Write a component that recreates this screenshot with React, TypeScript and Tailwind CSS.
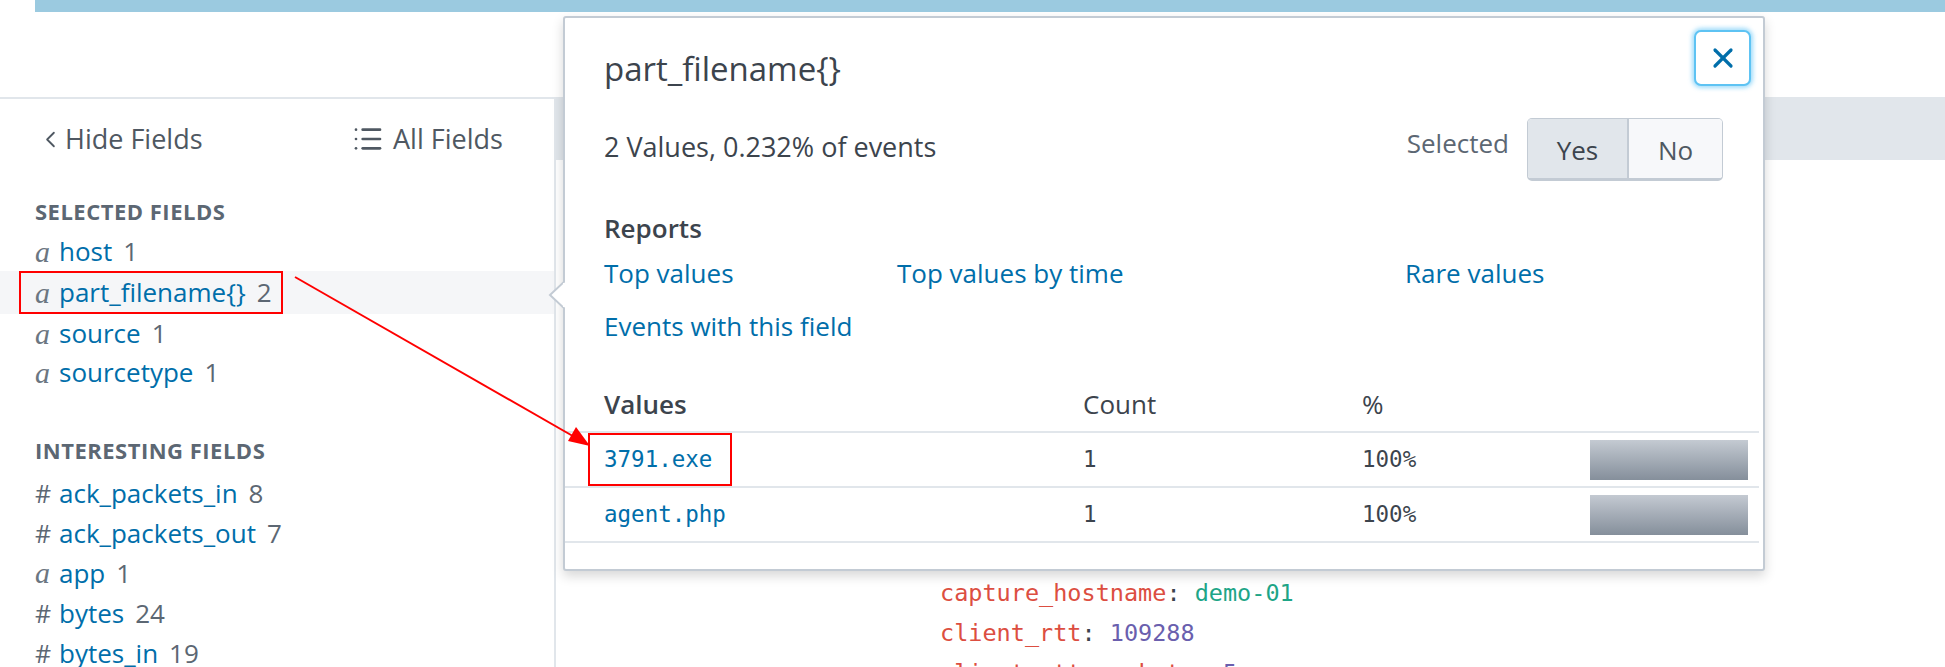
import { ChevronLeft, List, X } from "lucide-react";

const selected = [
  { type: "a", name: "host", count: "1" },
  { type: "a", name: "part_filename{}", count: "2", active: true },
  { type: "a", name: "source", count: "1" },
  { type: "a", name: "sourcetype", count: "1" },
];

const interesting = [
  { type: "#", name: "ack_packets_in", count: "8" },
  { type: "#", name: "ack_packets_out", count: "7" },
  { type: "a", name: "app", count: "1" },
  { type: "#", name: "bytes", count: "24" },
  { type: "#", name: "bytes_in", count: "19" },
];

const values = [
  { value: "3791.exe", count: "1", pct: "100%", marked: true },
  { value: "agent.php", count: "1", pct: "100%" },
];

function TypeMark({ type }: { type: string }) {
  if (type === "a") {
    return (
      <span className="w-[24px] shrink-0 font-['Liberation_Serif',serif] text-[30px] italic leading-none text-[#6b7681]">
        a
      </span>
    );
  }
  return <span className="w-[24px] shrink-0 text-[25px] leading-none text-[#5c6773]">#</span>;
}

function FieldRow({ field }: { field: { type: string; name: string; count: string; active?: boolean } }) {
  return (
    <div
      className={
        field.active
          ? "relative flex h-[43px] items-center bg-[#f5f6f8] pl-[35px]"
          : "relative flex h-[39px] items-center pl-[35px]"
      }
    >
      <TypeMark type={field.type} />
      <span className="text-[#006eaa]">{field.name}</span>
      <span className="ml-[11px] text-[#5c6773]">{field.count}</span>
      {field.active && <div className="absolute inset-y-0 left-[19px] w-[264px] border-2 border-[#ff0000]" />}
    </div>
  );
}

export default function App() {
  return (
    <div className="relative h-[667px] w-[1945px] overflow-hidden bg-white font-['Open_Sans',sans-serif] text-[26px] text-[#3c444d]">
      <header className="h-[99px] border-b-2 border-[#e1e6eb]">
        <div className="ml-[35px] h-[12px] bg-[#9bcae0]" />
      </header>

      <div className="flex h-[568px]">
        <aside className="w-[556px] shrink-0 border-r-2 border-[#e1e6eb]">
          <div className="box-content flex h-[36px] items-center pt-[22px] text-[27px] text-[#4f5862]">
            <div className="flex w-[352px] items-center pl-[37px]">
              <ChevronLeft className="h-[27px] w-[27px]" strokeWidth={1.6} />
              <span className="ml-[1px]">Hide Fields</span>
            </div>
            <div className="flex items-center">
              <List className="h-[32px] w-[32px]" strokeWidth={2} />
              <span className="ml-[9px]">All Fields</span>
            </div>
          </div>

          <h3 className="mt-[39px] pl-[35px] text-[22px] font-bold leading-[30px] tracking-[0.5px] text-[#5c6773]">
            SELECTED FIELDS
          </h3>
          <div className="mt-[6px]">
            {selected.map((f) => (
              <FieldRow key={f.name} field={f} />
            ))}
          </div>

          <h3 className="mt-[43px] pl-[35px] text-[22px] font-bold leading-[30px] tracking-[0.5px] text-[#5c6773]">
            INTERESTING FIELDS
          </h3>
          <div className="mt-[8px]">
            {interesting.map((f) => (
              <div key={f.name} className="flex h-[40px] items-center pl-[35px]">
                <TypeMark type={f.type} />
                <span className="text-[#006eaa]">{f.name}</span>
                <span className="ml-[11px] text-[#5c6773]">{f.count}</span>
              </div>
            ))}
          </div>
        </aside>

        <main className="flex-1">
          <div className="h-[61px] bg-[#e1e6eb]" />
          <div className="pl-[384px] pt-[413px] font-['DejaVu_Sans_Mono',monospace] text-[23.5px] leading-[40px]">
            <div>
              <span className="text-[#dc4e41]">capture_hostname</span>
              <span className="text-[#3c444d]">: </span>
              <span className="text-[#1ea587]">demo-01</span>
            </div>
            <div>
              <span className="text-[#dc4e41]">client_rtt</span>
              <span className="text-[#3c444d]">: </span>
              <span className="text-[#6a5fae]">109288</span>
            </div>
            <div>
              <span className="text-[#dc4e41]">client_rtt_packets</span>
              <span className="text-[#3c444d]">: </span>
              <span className="text-[#6a5fae]">5</span>
            </div>
          </div>
        </main>
      </div>

      {/* field summary popover */}
      <div className="absolute left-[563px] top-[16px] h-[555px] w-[1202px] rounded-[3px] border-2 border-[#c3cbd4] bg-white shadow-[0_5px_12px_rgba(0,0,0,0.16)]">
        <svg className="absolute left-[-17px] top-[262px]" width="17" height="30" viewBox="0 0 17 30">
          <path d="M17 1 L2 15 L17 29" fill="white" stroke="#c3cbd4" strokeWidth="2" />
          <rect x="15" y="3" width="3" height="24" fill="white" />
        </svg>

        <div className="flex items-start justify-between pl-[39px] pr-[12px] pt-[12px]">
          <h2 className="mt-[19px] text-[33px] font-medium leading-[40px] text-[#3c444d]">part_filename{"{}"}</h2>
          <button className="flex h-[56px] w-[57px] items-center justify-center rounded-[7px] border-2 border-[#5ec3f3] bg-white text-[#006eaa] shadow-[0_0_4px_2px_rgba(120,205,248,0.7)]">
            <X className="h-[32px] w-[32px]" strokeWidth={2.4} />
          </button>
        </div>

        <div className="mt-[29px] flex h-[63px] items-center justify-between pl-[39px] pr-[40px]">
          <span className="-mt-[5px] text-[27px]">2 Values, 0.232% of events</span>
          <div className="flex items-center">
            <span className="-mt-[13px] mr-[18px] text-[#5c6773]">Selected</span>
            <div className="flex h-[63px] overflow-hidden rounded-[5px] border border-b-[3px] border-[#c3cbd4]">
              <div className="flex w-[101px] items-center justify-center border-r-2 border-[#c3cbd4] bg-[#e1e6eb] pt-[4px]">
                Yes
              </div>
              <div className="flex w-[93px] items-center justify-center bg-[#f7f8fa] pt-[4px] text-[#4f5862]">No</div>
            </div>
          </div>
        </div>

        <h4 className="mt-[29px] pl-[39px] font-semibold leading-[36px]">Reports</h4>
        <div className="mt-[9px] grid grid-cols-[293px_508px_auto] gap-y-[17px] pl-[39px] leading-[36px] text-[#006eaa]">
          <span>Top values</span>
          <span>Top values by time</span>
          <span>Rare values</span>
          <span>Events with this field</span>
        </div>

        <div className="mr-[4px] mt-[40px]">
          <div className="flex h-[49px] border-b-2 border-[#e1e6eb] pl-[39px] leading-[40px]">
            <span className="w-[479px] font-semibold">Values</span>
            <span className="w-[279px]">Count</span>
            <span>%</span>
          </div>
          {values.map((v) => (
            <div
              key={v.value}
              className="relative flex h-[55px] items-center border-b-2 border-[#e1e6eb] pl-[39px] font-['DejaVu_Sans_Mono',monospace] text-[22.5px]"
            >
              <span className="w-[479px] text-[#006eaa]">{v.value}</span>
              <span className="w-[279px]">{v.count}</span>
              <span className="w-[228px]">{v.pct}</span>
              <div className="h-[40px] w-[158px] bg-linear-to-b from-[#c4cad2] to-[#858f9b]" />
              {v.marked && <div className="absolute bottom-0 left-[23px] top-0 w-[144px] border-2 border-[#ff0000]" />}
            </div>
          ))}
        </div>
      </div>

      {/* annotation arrow */}
      <svg className="pointer-events-none absolute inset-0" width="1945" height="667">
        <line x1="295" y1="277" x2="578" y2="439" stroke="#ff0000" strokeWidth="2" />
        <path d="M590 446 L568 441 L576 427 Z" fill="#ff0000" />
      </svg>
    </div>
  );
}
